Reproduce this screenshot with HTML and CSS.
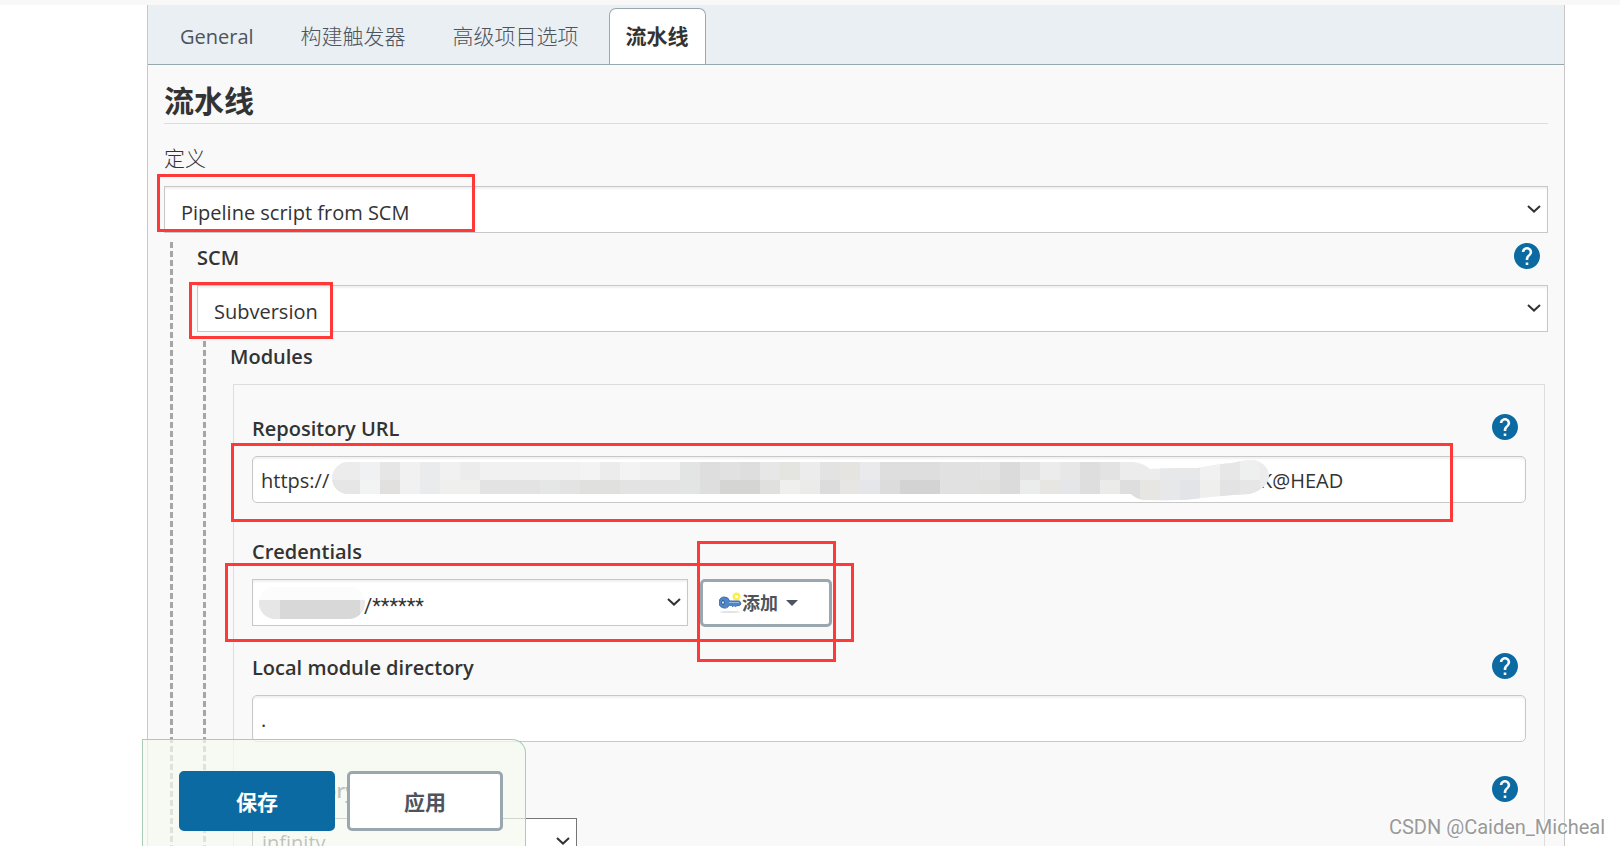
FILE: index.html
```
<!DOCTYPE html>
<html lang="zh-CN">
<head>
<meta charset="utf-8">
<title>流水线</title>
<link rel="stylesheet" href="styles.css">
</head>
<body>
<svg class="defs" aria-hidden="true">
  <symbol id="help" viewBox="2 2 20 20"><path fill="#0b6aa2" d="M12 2C6.480 2 2 6.480 2 12s4.480 10 10 10 10-4.480 10-10S17.520 2 12 2zm1 17h-2v-2h2v2zm2.070-7.750l-.9.920C13.450 12.900 13 13.500 13 15h-2v-.5c0-1.100.45-2.100 1.170-2.830l1.240-1.260c.37-.36.59-.86.59-1.410 0-1.100-.9-2-2-2s-2 .9-2 2H8c0-2.210 1.790-4 4-4s4 1.790 4 4c0 .88-.36 1.680-.93 2.250z"/></symbol>
  <symbol id="chevron" viewBox="0 0 14 8"><path d="M1 1l6 5.600L13 1" fill="none" stroke="#333" stroke-width="2"/></symbol>
</svg>
<div class="page">
  <main class="config">
    <nav class="tabs">
      <a class="tab" href="#general">General</a>
      <a class="tab" href="#triggers">构建触发器</a>
      <a class="tab" href="#advanced">高级项目选项</a>
      <a class="tab tab-active" href="#pipeline">流水线</a>
    </nav>
    <form class="form" id="pipeline">
      <h2 class="title">流水线</h2>
      <div class="field">
        <div class="label-row"><label class="label label-plain" for="definition">定义</label></div>
        <div class="control">
          <select class="select" id="definition"><option>Pipeline script from SCM</option></select>
          <svg class="chevron"><use href="#chevron"/></svg>
          <span class="mark mark-definition"></span>
        </div>
      </div>
      <div class="nested">
        <div class="label-row">
          <label class="label" for="scm">SCM</label>
          <button type="button" class="help" aria-label="SCM help"><svg><use href="#help"/></svg></button>
        </div>
        <div class="control">
          <select class="select" id="scm"><option>Subversion</option></select>
          <svg class="chevron"><use href="#chevron"/></svg>
          <span class="mark mark-scm"></span>
        </div>
        <div class="nested">
          <div class="label-row"><span class="label">Modules</span></div>
          <div class="module">
            <div class="label-row">
              <label class="label" for="url">Repository URL</label>
              <button type="button" class="help" aria-label="Repository URL help"><svg><use href="#help"/></svg></button>
            </div>
            <div class="control">
              <input class="input" id="url" type="text" value="https://">
              <div class="url-rest">
                <span class="url-tail">K@HEAD</span>
                <svg class="mosaic" width="938" height="42" viewBox="0 0 938 42">
                  <clipPath id="smear"><path d="M16 2H800Q812 3 818 9Q828 8 866 8Q885 4 900 3Q912 0 922 0Q937 4 937 17Q936 28 918 34Q880 36 862 39Q840 41 812 40Q804 39 799 34H16A16 16 0 0 1 16 2z"/></clipPath>
                  <g clip-path="url(#smear)">
                    <path fill="#ececec" d="M0 0h938v42H0z"/>
                    <path fill="#eff1f3" d="M28 0h20v20h-20z"/>
                    <path fill="#e6e6e6" d="M48 0h20v20h-20z"/>
                    <path fill="#f1f1f1" d="M68 0h20v34h-20zM108 0h20v20h-20zM148 0h100v20h-100z"/>
                    <path fill="#eaebed" d="M88 0h20v34h-20z"/>
                    <path fill="#f3f3f3" d="M248 0h20v20h-20zM288 0h20v20h-20z"/>
                    <path fill="#f0f0f0" d="M308 0h40v20h-40z"/>
                    <path fill="#e3e5e4" d="M348 0h20v34h-20z"/>
                    <path fill="#dedede" d="M368 0h20v34h-20zM408 0h20v20h-20zM548 0h60v20h-60zM748 0h20v42h-20zM788 20h20v20h-20z"/>
                    <path fill="#e1e1e1" d="M388 0h20v20h-20zM608 0h40v34h-40z"/>
                    <path fill="#e7e7e7" d="M428 0h20v20h-20zM728 0h20v20h-20z"/>
                    <path fill="#e4e4e1" d="M448 0h20v20h-20z"/>
                    <path fill="#e3e3e3" d="M488 0h20v20h-20zM648 0h20v20h-20zM688 0h20v20h-20zM768 0h20v20h-20z"/>
                    <path fill="#e6e4e1" d="M508 0h20v20h-20z"/>
                    <path fill="#eaeaec" d="M528 0h20v20h-20z"/>
                    <path fill="#dbdbdb" d="M668 0h20v34h-20z"/>
                    <path fill="#e7e8ea" d="M828 0h40v42h-40z"/>
                    <path fill="#f1f1f1" d="M868 0h20v20h-20z"/>
                    <path fill="#e7e7e7" d="M888 0h20v20h-20z"/>
                    <path fill="#eef0ef" d="M908 0h20v20h-20z"/>
                    <path fill="#e6e6e6" d="M0 20h28v20h-28zM908 20h20v20h-20z"/>
                    <path fill="#f2f4f4" d="M28 20h20v20h-20z"/>
                    <path fill="#e2e0df" d="M48 20h20v20h-20z"/>
                    <path fill="#efefed" d="M108 20h40v20h-40zM448 20h20v20h-20zM868 20h20v20h-20z"/>
                    <path fill="#e3e3e3" d="M148 20h60v20h-60zM228 20h20v20h-20zM288 20h60v20h-60zM888 20h20v20h-20z"/>
                    <path fill="#e5e7e6" d="M208 20h20v20h-20z"/>
                    <path fill="#e0e0df" d="M248 20h40v20h-40zM428 20h20v20h-20zM648 20h20v20h-20z"/>
                    <path fill="#d5d5d4" d="M388 20h40v20h-40z"/>
                    <path fill="#ebebe9" d="M468 20h20v20h-20zM768 20h20v20h-20z"/>
                    <path fill="#dcdcdc" d="M488 20h20v20h-20zM548 20h20v20h-20z"/>
                    <path fill="#e8e6e3" d="M508 20h20v20h-20zM708 20h20v20h-20zM808 20h20v20h-20z"/>
                    <path fill="#e5e6e9" d="M528 20h20v20h-20zM728 20h20v20h-20z"/>
                    <path fill="#d3d3d3" d="M568 20h40v20h-40z"/>
                    <path fill="#eaedec" d="M688 20h20v20h-20z"/>
                    <path fill="#e3e4e7" d="M848 20h20v22h-20z"/>
                  </g>
                </svg>
              </div>
              <span class="mark mark-url"></span>
            </div>
            <div class="label-row gap-large"><label class="label" for="credentials">Credentials</label></div>
            <div class="credentials">
              <div class="control credentials-select">
                <select class="select select-masked" id="credentials"><option>/******</option></select>
                <svg class="chevron"><use href="#chevron"/></svg>
                <svg class="mosaic-user" width="106" height="32" viewBox="0 0 106 32">
                  <clipPath id="user-smear"><rect width="106" height="32" rx="16"/></clipPath>
                  <g clip-path="url(#user-smear)"><path fill="#fcfcfc" d="M0 0h106v13H0z"/><path fill="#e6e6e6" d="M0 13h21v19H0z"/><path fill="#d8d8d8" d="M21 13h80v19H21z"/><path fill="#e9e9e9" d="M101 13h5v19h-5z"/></g>
                </svg>
              </div>
              <button type="button" class="add">
                <svg class="key" width="23" height="22" viewBox="0 0 23 22">
                  <ellipse cx="11" cy="20" rx="10" ry="1" fill="#e2e2e2"/>
                  <circle cx="17.500" cy="4.500" r="2.800" fill="#fff" stroke="#fbf04a" stroke-width="2.400"/>
                  <path d="M5.500 5a5.500 5.500 0 1 0 4.800 8.200l2.200.2 1 1.200 1.500-1 1.500 1 1.500-1h2.500l1.500-1.700-1.500-2.900H10.600A5.500 5.500 0 0 0 5.500 5z" fill="#4f86c6" stroke="#3c6dac"/>
                  <ellipse cx="4" cy="10.500" rx="1.300" ry="2" fill="#fff" stroke="#264f86"/>
                  <path d="M10 10.500h10" stroke="#8fb8e4"/>
                </svg><span>添加</span><svg class="caret" width="12" height="6" viewBox="0 0 12 6"><path d="M0 0h12L6 6z" fill="#4d545d"/></svg>
              </button>
              <span class="mark mark-credentials"></span>
              <span class="mark mark-add"></span>
            </div>
            <div class="label-row gap-small">
              <label class="label" for="local">Local module directory</label>
              <button type="button" class="help" aria-label="Local module directory help"><svg><use href="#help"/></svg></button>
            </div>
            <div class="control"><input class="input" id="local" type="text" value="."></div>
            <div class="label-row gap-large">
              <label class="label" for="depth">Repository depth</label>
              <button type="button" class="help" aria-label="Repository depth help"><svg><use href="#help"/></svg></button>
            </div>
            <div class="control depth">
              <select class="select select-depth" id="depth"><option>infinity</option></select>
              <svg class="chevron"><use href="#chevron"/></svg>
            </div>
          </div>
        </div>
      </div>
    </form>
  </main>
  <div class="actions">
    <button type="submit" form="pipeline" class="action action-save">保存</button>
    <button type="button" class="action action-apply">应用</button>
  </div>
  <div class="watermark">CSDN @Caiden_Micheal</div>
</div>
</body>
</html>
```
FILE: styles.css
```
* { box-sizing: border-box; }
body {
  margin: 0;
  background: #fff;
  color: #333;
  font: 20px/30px "Open Sans", "Noto Sans CJK SC", sans-serif;
}
button, input, select { font: inherit; color: inherit; margin: 0; }
.defs { position: absolute; width: 0; height: 0; }
.page {
  position: relative;
  height: 100vh;
  overflow: hidden;
  border-top: 5px solid #f8f8f8;
}
.config {
  margin: 0 55px 0 147px;
  min-height: 100%;
  border: solid #c8c8c8;
  border-width: 0 1px;
  background: #f9f9f9;
}
.tabs {
  display: flex;
  gap: 13px;
  padding: 3px 16px 0 15px;
  background: #e9eff2;
  border-bottom: 1px solid #98a8b1;
}
.tab {
  height: 56px;
  padding: 0 16px;
  border: 1px solid transparent;
  border-bottom: 0;
  line-height: 54px;
  color: #4d545d;
  text-decoration: none;
  font-size: 21px;
  font-weight: 300;
}
.tab:first-child { font-size: 20px; font-weight: 400; line-height: 56px; }
.tab-active {
  background: #fff;
  border-color: #98a8b1;
  border-radius: 7px 7px 0 0;
  color: #333;
  font-weight: 700;
}
.form { padding: 14px 16px 0; }
.title {
  margin: 0 0 20px;
  padding-bottom: 1px;
  border-bottom: 1px solid #ddd;
  font-size: 30px;
  line-height: 43px;
}
.label-row {
  display: flex;
  align-items: flex-start;
  justify-content: space-between;
  height: 30px;
  margin-bottom: 12px;
  padding-right: 8px;
}
.label { font-weight: 600; }
.label-plain { font-size: 21px; font-weight: 300; line-height: 28px; }
.gap-large { margin-top: 34px; }
.gap-small { margin-top: 26px; }
.help { padding: 0; border: 0; background: none; width: 26px; height: 26px; }
.help svg { display: block; width: 26px; height: 26px; }
.control { position: relative; }
.select, .input {
  display: block;
  width: 100%;
  height: 47px;
  border: 1px solid #c8c8c8;
  border-radius: 0;
  background: #fff;
  box-shadow: inset 0 2px 2px rgba(0, 0, 0, 0.06);
  appearance: none;
}
.select { padding: 6px 16px 0; }
.input { padding: 2px 8px 0; border-radius: 5px; }
.chevron {
  position: absolute;
  right: 7px;
  top: 19px;
  width: 14px;
  height: 8px;
}
.nested {
  margin: 9px 0 0 6px;
  padding: 1px 0 0 27px;
  background: repeating-linear-gradient(#a6a6a6 0 6px, transparent 6px 9px) 0 0 / 3px 100% no-repeat;
}
.module {
  margin: 0 3px;
  padding: 29px 18px 40px;
  border: 1px solid #ddd;
}
.url-rest { position: absolute; left: 80px; top: 4px; height: 42px; display: flex; }
.url-tail { position: absolute; left: 928px; top: 6px; }
.mosaic { position: relative; }
.credentials { position: relative; display: flex; gap: 12px; width: 580px; }
.credentials-select { flex: 1; }
.select-masked { padding-left: 111px; font-family: Roboto, sans-serif; }
.mosaic-user { position: absolute; left: 7px; top: 8px; }
.add {
  display: flex;
  align-items: center;
  width: 132px;
  height: 48px;
  padding: 0 16px;
  border: 3px solid #9aa7af;
  border-radius: 5px;
  background: #fff;
  color: #4d545d;
  font-size: 18px;
  font-weight: 700;
}
.caret { margin-left: 8px; }
.depth { width: 325px; }
.select-depth { border-color: #767676; box-shadow: none; padding: 2px 9px 0; }
.mark { position: absolute; border: 3px solid #ff3838; pointer-events: none; }
.mark-definition { left: -7px; top: -12px; width: 318px; height: 58px; }
.mark-scm { left: -8px; top: -3px; width: 144px; height: 57px; }
.mark-url { left: -21px; top: -13px; right: 73px; height: 79px; }
.mark-credentials { left: -27px; right: -22px; top: -16px; height: 79px; }
.mark-add { right: -4px; top: -38px; width: 139px; height: 121px; }
.actions {
  position: absolute;
  left: 142px;
  bottom: 0;
  display: flex;
  gap: 12px;
  padding: 31px 22px 15px 36px;
  border: solid #a9ccb8;
  border-width: 1px 1px 0;
  border-top-right-radius: 14px;
  background: rgba(245, 249, 240, 0.72);
}
.action {
  width: 156px;
  height: 60px;
  padding: 2px 0 0;
  border: 3px solid #9aa7af;
  border-radius: 5px;
  background: #fff;
  color: #4d545d;
  font-size: 21px;
  font-weight: 700;
}
.action-save { border-color: #0b6aa2; background: #0b6aa2; color: #fff; }
.watermark {
  position: absolute;
  right: 15px;
  bottom: 4px;
  color: #999;
  font: 20px/30px Roboto, sans-serif;
  text-shadow: -1px -1px 0 #fff;
}
```
